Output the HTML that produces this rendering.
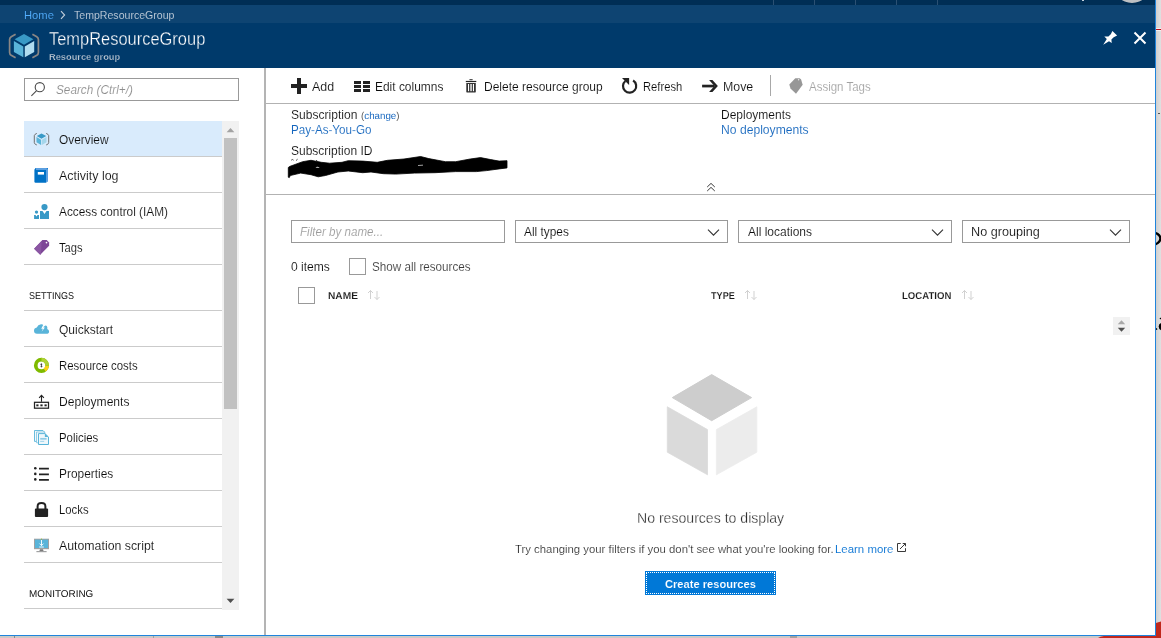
<!DOCTYPE html>
<html lang="en">
<head>
<meta charset="utf-8">
<title>TempResourceGroup - Resource group</title>
<style>
html,body{margin:0;padding:0;background:#fff;}
body{width:1161px;height:638px;overflow:hidden;font-family:"Liberation Sans",sans-serif;}
#page{will-change:transform;position:relative;width:1161px;height:638px;overflow:hidden;background:#fff;}
#page div,#page span,#page svg{position:absolute;display:block;box-sizing:border-box;}
.t{white-space:nowrap;margin:0;padding:0;transform-origin:0 50%;}
.hl{height:1px;background:#cbcbcb;left:24px;width:198px;}
.box{border:1px solid #999999;background:#fff;}
.cb{border:1px solid #999999;background:#fff;width:17px;height:17px;}

</style>
</head>
<body>
<div id="page">
<!-- chrome: top strip, breadcrumb, blade header -->
<div style="left:0;top:0;width:1155px;height:5px;background:#002e55;"></div>
<div style="left:773px;top:0;width:1px;height:5px;background:#2b5073;"></div>
<div style="left:814px;top:0;width:1px;height:5px;background:#2b5073;"></div>
<div style="left:855px;top:0;width:1px;height:5px;background:#2b5073;"></div>
<div style="left:896px;top:0;width:1px;height:5px;background:#2b5073;"></div>
<div style="left:937px;top:0;width:1px;height:5px;background:#2b5073;"></div>
<div style="left:1082px;top:0;width:2px;height:1px;background:#c4d0dc;"></div>
<div style="left:1113px;top:-35px;width:38px;height:38px;border-radius:50%;background:#bdc0c3;"></div>
<div style="left:0;top:5px;width:1155px;height:18px;background:#0e4472;"></div>
<div style="left:0;top:23px;width:1155px;height:45px;background:#003a6b;"></div>

<!-- breadcrumb chevron -->
<svg style="left:59px;top:10px;" width="8" height="10" viewBox="0 0 8 10"><path d="M2 1.2 L5.6 5 L2 8.8" fill="none" stroke="#c5d0dc" stroke-width="1.1"/></svg>

<!-- header resource-group icon -->
<svg style="left:8px;top:32px;" width="33" height="28" viewBox="8 32 33 28">
  <path d="M15.6 34.3 L11.2 36.8 Q9.6 37.8 9.6 39.6 L9.6 52.4 Q9.6 54.2 11.2 55.2 L15.6 57.7" fill="none" stroke="#8a8785" stroke-width="1.7"/>
  <path d="M32.4 34.3 L36.8 36.8 Q38.4 37.8 38.4 39.6 L38.4 52.4 Q38.4 54.2 36.8 55.2 L32.4 57.7" fill="none" stroke="#8a8785" stroke-width="1.7"/>
  <path d="M24 33.9 L33.4 39.3 L24 44.7 L14.6 39.3 Z" fill="#3999c6"/>
  <path d="M13.9 41 L23.3 46.4 L23.3 57.3 L13.9 51.9 Z" fill="#59b4d9"/>
  <path d="M24.8 46.4 L34.2 41 L34.2 51.9 L24.8 57.3 Z" fill="#b0dcef"/>
</svg>

<!-- pin + close -->
<svg style="left:1102px;top:30px;" width="16" height="16" viewBox="0 0 16 16">
  <path d="M10.4 1 L15.1 5.6 L11.7 7.2 L9.4 9.4 L9.7 13 L7 11.2 L1.2 14.8 L4.8 9 L2.3 6.4 L6.4 6.6 L8.8 4.2 Z" fill="#ffffff"/>
</svg>
<svg style="left:1133px;top:31px;" width="14" height="14" viewBox="0 0 14 14">
  <path d="M1.5 1.5 L12.5 12.5 M12.5 1.5 L1.5 12.5" stroke="#ffffff" stroke-width="2" fill="none"/>
</svg>

<!-- window edges -->
<div style="left:1155px;top:0;width:1px;height:636px;background:#1f84dc;"></div>
<div style="left:1156px;top:0;width:5px;height:638px;background:linear-gradient(90deg,#d2cecb 0,#d6d6d6 35%,#e0e0e0 100%);"></div>
<div style="left:1156px;top:28px;width:5px;height:3px;background:#f4f0f0;"></div>
<div style="left:1156px;top:29px;width:5px;height:1px;background:#c00d18;"></div>
<div style="left:1158px;top:113px;width:2px;height:1px;background:#555;"></div>
<svg style="left:1156px;top:229px;" width="5" height="19" viewBox="1156 229 5 19"><ellipse cx="1152" cy="238.6" rx="8.4" ry="6.1" fill="none" stroke="#000" stroke-width="2.3"/></svg>
<svg style="left:1156px;top:316px;" width="5" height="16" viewBox="1156 316 5 16"><path d="M1159.4 318.5 L1161 317.6 V319.6 Z" fill="#000"/><ellipse cx="1162.6" cy="326.6" rx="3.9" ry="3.8" fill="#000"/><path d="M1156 328.2 L1157 328 L1157.3 329.8 L1156 330 Z" fill="#1a1a1a"/></svg>


<div style="left:0;top:635px;width:1156px;height:1px;background:#1f84dc;"></div>
<div style="left:0;top:636px;width:1161px;height:2px;background:#cdc9c6;"></div>
<div style="left:14px;top:636px;width:1px;height:2px;background:#8c8c8c;"></div>
<div style="left:153px;top:636px;width:1px;height:2px;background:#a0a0a0;"></div>
<div style="left:215px;top:636px;width:8px;height:2px;background:#8d8986;"></div>
<div style="left:790px;top:636px;width:7px;height:2px;background:#a5a19e;"></div>
<svg style="left:1095px;top:620px;" width="66" height="18" viewBox="1095 620 66 18">
  <path d="M1156 623 Q1158 622 1161 621.5 L1161 638 L1098 638 Q1100 636.6 1104 636 L1156 636 Z" fill="#c0281c"/>
</svg>

<!-- sidebar -->
<div class="box" style="left:24px;top:78px;width:215px;height:23px;"></div>
<svg style="left:30px;top:81px;" width="16" height="16" viewBox="0 0 16 16">
  <circle cx="9.8" cy="6.2" r="4.6" fill="none" stroke="#4a4a4a" stroke-width="1.1"/>
  <path d="M6.6 9.6 L1.4 14.8" stroke="#4a4a4a" stroke-width="1.1" fill="none"/>
</svg>
<div style="left:24px;top:121px;width:198px;height:35px;background:#d9ebfc;"></div>
<div class="hl" style="top:156px;"></div>
<div class="hl" style="top:192px;"></div>
<div class="hl" style="top:228px;"></div>
<div class="hl" style="top:264px;"></div>
<div class="hl" style="top:310px;"></div>
<div class="hl" style="top:346px;"></div>
<div class="hl" style="top:382px;"></div>
<div class="hl" style="top:418px;"></div>
<div class="hl" style="top:454px;"></div>
<div class="hl" style="top:490px;"></div>
<div class="hl" style="top:526px;"></div>
<div class="hl" style="top:562px;"></div>
<div class="hl" style="top:608px;"></div>
<!-- sidebar scrollbar -->
<div style="left:222px;top:121px;width:17px;height:489px;background:#f1f1f1;"></div>
<div style="left:224px;top:138px;width:13px;height:271px;background:#c1c1c1;"></div>
<svg style="left:226px;top:127px;" width="9" height="6" viewBox="0 0 9 6"><path d="M0.6 5.2 L4.5 1 L8.4 5.2 Z" fill="#a3a3a3"/></svg>
<svg style="left:226px;top:598px;" width="9" height="6" viewBox="0 0 9 6"><path d="M0.6 0.8 L8.4 0.8 L4.5 5 Z" fill="#505050"/></svg>
<!-- splitter -->
<div style="left:264px;top:68px;width:2px;height:567px;background:#b4b4b4;"></div>

<!-- content lines -->
<div style="left:266px;top:103px;width:889px;height:1px;background:#b2b2b2;"></div>
<div style="left:266px;top:194px;width:889px;height:1px;background:#b2b2b2;"></div>
<div style="left:770px;top:75px;width:1px;height:21px;background:#a8a8a8;"></div>

<!-- filter boxes -->
<div class="box" style="left:291px;top:220px;width:214px;height:23px;"></div>
<div class="box" style="left:515px;top:220px;width:213px;height:23px;"></div>
<div class="box" style="left:738px;top:220px;width:214px;height:23px;"></div>
<div class="box" style="left:962px;top:220px;width:168px;height:23px;"></div>
<svg style="left:707px;top:228px;" width="13" height="9" viewBox="0 0 13 9"><path d="M1 1.6 L6.5 7.2 L12 1.6" fill="none" stroke="#333" stroke-width="1.1"/></svg>
<svg style="left:931px;top:228px;" width="13" height="9" viewBox="0 0 13 9"><path d="M1 1.6 L6.5 7.2 L12 1.6" fill="none" stroke="#333" stroke-width="1.1"/></svg>
<svg style="left:1109px;top:228px;" width="13" height="9" viewBox="0 0 13 9"><path d="M1 1.6 L6.5 7.2 L12 1.6" fill="none" stroke="#333" stroke-width="1.1"/></svg>
<div class="cb" style="left:349px;top:258px;"></div>
<div class="cb" style="left:298px;top:287px;"></div>

<!-- collapse chevron -->
<svg style="left:706px;top:182px;" width="10" height="10" viewBox="0 0 10 10"><path d="M1.2 5 L5 1.4 L8.8 5 M1.2 9 L5 5.4 L8.8 9" fill="none" stroke="#3a3a3a" stroke-width="1"/></svg>

<!-- sort arrows -->
<svg style="left:367px;top:289px;" width="14" height="12" viewBox="0 0 14 12"><path d="M3.5 10 L3.5 1.5 M1 4 L3.5 1.5 L6 4 M10 2 L10 10.5 M7.5 8 L10 10.5 L12.5 8" fill="none" stroke="#cccccc" stroke-width="0.9"/></svg>
<svg style="left:744px;top:289px;" width="14" height="12" viewBox="0 0 14 12"><path d="M3.5 10 L3.5 1.5 M1 4 L3.5 1.5 L6 4 M10 2 L10 10.5 M7.5 8 L10 10.5 L12.5 8" fill="none" stroke="#cccccc" stroke-width="0.9"/></svg>
<svg style="left:961px;top:289px;" width="14" height="12" viewBox="0 0 14 12"><path d="M3.5 10 L3.5 1.5 M1 4 L3.5 1.5 L6 4 M10 2 L10 10.5 M7.5 8 L10 10.5 L12.5 8" fill="none" stroke="#cccccc" stroke-width="0.9"/></svg>

<!-- grid mini scrollbar -->
<div style="left:1113px;top:317px;width:17px;height:18px;background:#f1f1f1;"></div>
<svg style="left:1117px;top:319px;" width="9" height="6" viewBox="0 0 9 6"><path d="M0.8 5.2 L4.5 1.2 L8.2 5.2 Z" fill="#a8a8a8"/></svg>
<svg style="left:1117px;top:327px;" width="9" height="6" viewBox="0 0 9 6"><path d="M0.8 0.8 L8.2 0.8 L4.5 4.8 Z" fill="#505050"/></svg>

<!-- redaction scribble -->
<svg style="left:286px;top:154px;" width="224" height="28" viewBox="286 154 224 28">
  <path d="M288.3 167.5 L289.5 166.5 L302.7 161.7 L311 160.3 L321.3 162.3 L329.6 163.2 L342 162.3 L348.2 160.7 L362.7 161.1 L377.2 162.3 L387.5 160.3 L404 159 L420.6 156.5 L428.8 158.6 L445.4 161.7 L455.7 161.7 L470.2 159 L480.5 157.6 L490.8 159.6 L499.1 161.1 L507 160.7 L507 167.9 L499.1 168.9 L486.7 170.6 L476.4 171.6 L455.7 171.6 L435 172.7 L414.4 173.1 L395.8 174.1 L383.4 173.7 L371 172 L362.7 172.7 L348.2 171 L337.9 172 L325.5 175.5 L318.2 176.8 L311 174.7 L300.7 173.1 L290.3 175.5 L289.3 177.6 L288.3 177.2 Z" fill="#000" stroke="#000" stroke-width="0.8" stroke-linejoin="round"/>
  <path d="M291.2 160.2 q1.2 -1.4 2.4 0 M296 160.6 l1.6 -1.4 M316 160.5 l1.2 0" stroke="#222" stroke-width="0.8" fill="none"/>
  <path d="M315.5 167.2 q2 -0.9 4.2 0.3 q-2.2 0.7 -4.2 -0.3 Z" fill="#e8e8e8"/>
  <path d="M418 165.1 l5 -0.4 l0 0.7 l-5 0.3 Z" fill="#d8d8d8"/>
</svg>

<!-- empty state cube -->
<svg style="left:660px;top:370px;" width="104" height="110" viewBox="660 370 104 110">
  <path d="M711.7 374.6 L751.6 397.6 L711.7 420.7 L672.3 397.6 Z" fill="#cdcdcd" stroke="#cdcdcd" stroke-width="1" stroke-linejoin="round"/>
  <path d="M667.3 406.8 L707.5 429.6 L707.5 474.8 L667.3 452.2 Z" fill="#dadada" stroke="#dadada" stroke-width="0.8" stroke-linejoin="round"/>
  <path d="M716.4 429.6 L756.8 406.8 L756.8 452.2 L716.4 474.8 Z" fill="#ececec" stroke="#ececec" stroke-width="0.8" stroke-linejoin="round"/>
</svg>

<!-- create button -->
<div style="left:645px;top:571px;width:131px;height:24px;background:#0078d7;"></div>
<div style="left:646px;top:572px;width:129px;height:22px;border:1px dotted #ffffff;"></div>

<!-- external link icon -->
<svg style="left:896px;top:542px;" width="11" height="11" viewBox="0 0 11 11">
  <path d="M4.7 1.5 H1.5 V9.5 H9.5 V6.2" fill="none" stroke="#3a3a3a" stroke-width="1"/>
  <path d="M4 7 L9.4 1.6 M6.7 1.5 H9.5 V4.3" fill="none" stroke="#3a3a3a" stroke-width="1"/>
</svg>
<!-- toolbar icons -->
<svg style="left:290px;top:77px;" width="18" height="18" viewBox="290 77 18 18">
  <path d="M297 78 H301 V84 H307 V88 H301 V94 H297 V88 H291 V84 H297 Z" fill="#222"/>
</svg>
<svg style="left:353px;top:80px;" width="18" height="13" viewBox="353 80 18 13">
  <path d="M354 81 h7 v3 h-7 Z M363 81 h7 v3 h-7 Z M354 85 h7 v3 h-7 Z M363 85 h7 v3 h-7 Z M354 89 h7 v3 h-7 Z M363 89 h7 v3 h-7 Z" fill="#222"/>
</svg>
<svg style="left:465px;top:78px;" width="13" height="16" viewBox="465 78 13 16">
  <rect x="469.3" y="79" width="3.5" height="1.2" rx="0.6" fill="#555"/>
  <rect x="465.8" y="80.9" width="10.5" height="1.2" fill="#222"/>
  <path d="M466.3 83 H475.8 V91.4 Q475.8 92.6 474.6 92.6 H467.5 Q466.3 92.6 466.3 91.4 Z" fill="#333"/>
  <rect x="468" y="84" width="1.1" height="7.2" fill="#fff"/>
  <rect x="470.2" y="84" width="1.7" height="7.2" fill="#d5d5d5"/>
  <rect x="472.9" y="84" width="1.1" height="7.2" fill="#fff"/>
</svg>
<svg style="left:620px;top:76px;" width="19" height="19" viewBox="620 76 19 19">
  <path d="M625.4 81 A6.6 6.6 0 1 0 633.1 80.5" fill="none" stroke="#222" stroke-width="2.2"/>
  <path d="M622 78 L629.1 78 L629.1 85 Z" fill="#222"/>
</svg>
<svg style="left:700px;top:79px;" width="19" height="14" viewBox="700 79 19 14">
  <path d="M702.1 84.7 H714 V87.4 H702.1 Z" fill="#222"/>
  <path d="M709.1 80.1 H712.4 L717.9 86 L712.4 91.9 H709.1 L714.4 86 Z" fill="#222"/>
</svg>
<svg style="left:788px;top:77px;" width="16" height="18" viewBox="788 77 16 18">
  <path d="M789.3 84.6 L795.3 78.2 H799.6 L801 79.2 L802.7 84.8 L796 93.7 L790.5 88.4 Z" fill="#979797"/>
  <circle cx="798.6" cy="79.8" r="0.7" fill="#e8e8e8"/>
</svg>

<!-- sidebar icons -->
<!-- overview -->
<svg style="left:33px;top:132px;" width="17" height="15" viewBox="33 132 17 15">
  <path d="M36.8 133.4 L34.9 134.5 Q34.3 134.9 34.3 135.7 V142.7 Q34.3 143.5 34.9 143.9 L36.8 145" fill="none" stroke="#6f6f6f" stroke-width="1"/>
  <path d="M46.2 133.4 L48.1 134.5 Q48.7 134.9 48.7 135.7 V142.7 Q48.7 143.5 48.1 143.9 L46.2 145" fill="none" stroke="#6f6f6f" stroke-width="1"/>
  <path d="M41.5 133.4 L46.2 136.1 L41.5 138.8 L36.8 136.1 Z" fill="#3999c6"/>
  <path d="M36.5 137 L41.1 139.7 V145 L36.5 142.3 Z" fill="#59b4d9"/>
  <path d="M41.9 139.7 L46.5 137 V142.3 L41.9 145 Z" fill="#a5d6eb"/>
</svg>
<!-- activity log -->
<svg style="left:33px;top:167px;" width="17" height="17" viewBox="33 167 17 17">
  <path d="M35.2 168 H48 V181.6 L46 182.8 V170 H34.6 Z" fill="#5b9fe0"/>
  <path d="M34.4 170 H46 V182.8 H35.6 Q34.4 182.8 34.4 181.6 Z" fill="#0072c6"/>
  <path d="M34.4 170 L35.2 168.6 H36 V170 Z" fill="#0072c6"/>
  <rect x="46.8" y="168" width="1.2" height="1.1" fill="#1b7fd0"/>
  <rect x="37.8" y="172" width="6.2" height="2.6" fill="#fff"/>
</svg>
<!-- access control -->
<svg style="left:33px;top:203px;" width="17" height="17" viewBox="33 203 17 17">
  <circle cx="44.5" cy="207.1" r="3.1" fill="#3999c6"/>
  <path d="M40 211 H42.5 L44.5 214.1 L46.5 211 H49 V219 H40 Z" fill="#3999c6"/>
  <circle cx="36.5" cy="212.1" r="1.65" fill="#3999c6"/>
  <path d="M34.1 215 H35.5 L36.5 216.5 L37.5 215 H39 V219 H34.1 Z" fill="#3999c6"/>
</svg>
<!-- tags -->
<svg style="left:33px;top:239px;" width="17" height="17" viewBox="33 239 17 17">
  <path d="M42.4 240.1 H46.8 L49.1 242.4 V245.8 L40.2 254.7 L34.1 248.7 Z" fill="#7d4797"/>
  <path d="M41.6 240.9 L41 253.9 L40.2 254.7 L34.1 248.7 Z" fill="#8b56a3"/>
  <circle cx="46.5" cy="242.6" r="0.85" fill="#fff"/>
</svg>
<!-- quickstart -->
<svg style="left:33px;top:323px;" width="17" height="12" viewBox="33 323 17 12">
  <path d="M37 333.8 Q34 333.8 34 330.8 Q34 328 36.8 327.5 Q37.8 324.6 41 324.3 Q42.6 324.2 43.4 324.9 L44.3 326.6 Q44.9 325.3 45.8 325.4 Q47 325.6 47.3 327.2 Q47.5 328.2 47.2 329 Q49.1 329.6 49.1 331.4 Q49.1 333.8 46.4 333.8 Z" fill="#59b4d9"/>
  <path d="M43.7 324 L41.2 328.8 H42.9 L41.6 331.8 L44.9 327.6 H43.4 L44.9 324.6 Z" fill="#fff"/>
</svg>
<!-- resource costs -->
<svg style="left:33px;top:357px;" width="17" height="17" viewBox="33 357 17 17">
  <circle cx="41.45" cy="365.4" r="5.7" fill="none" stroke="#7fba00" stroke-width="3.7"/>
  <path d="M41.45 359.7 A5.7 5.7 0 0 1 47.15 365.6" fill="none" stroke="#add133" stroke-width="3.7"/>
  <path d="M47.1 365.9 A5.7 5.7 0 0 1 44.7 370.1" fill="none" stroke="#fcd116" stroke-width="3.7"/>
  <path d="M41.45 363.4 V367.4 M40.4 364.4 H42.2 M40.6 366.4 H42.4" stroke="#333" stroke-width="0.8" fill="none"/>
</svg>
<!-- deployments -->
<svg style="left:33px;top:394px;" width="17" height="16" viewBox="33 394 17 16">
  <rect x="34.5" y="402.3" width="14" height="5.9" fill="#fff" stroke="#222" stroke-width="1.25"/>
  <rect x="36.3" y="404.4" width="2.2" height="1.9" fill="#222"/>
  <rect x="40.4" y="404.4" width="2.2" height="1.9" fill="#222"/>
  <rect x="44.5" y="404.4" width="2.2" height="1.9" fill="#222"/>
  <path d="M41.5 401.8 V395.4 M39.1 397.8 L41.5 395.4 L43.9 397.8" fill="none" stroke="#222" stroke-width="1.1"/>
</svg>
<!-- policies -->
<svg style="left:33px;top:429px;" width="17" height="17" viewBox="33 429 17 17">
  <path d="M34.5 430.5 H43 L44.6 432.1 V441.4 H34.5 Z" fill="#f3f9fc" stroke="#59b4d9" stroke-width="0.9"/>
  <path d="M36.5 432 H44.6 V442.8 H36.5 Z" fill="#f3f9fc" stroke="#7cc3e1" stroke-width="0.8"/>
  <path d="M38.5 433.6 H44.9 L48.5 437 V444.5 H38.5 Z" fill="#eef7fb" stroke="#59b4d9" stroke-width="1"/>
  <path d="M44.9 433.6 L48.5 437 H44.9 Z" fill="#59b4d9"/>
  <path d="M40.2 438.8 H46.6" stroke="#8fcbe6" stroke-width="1.7" fill="none"/>
  <path d="M40.2 441.4 H44.2" stroke="#8fcbe6" stroke-width="0.8" fill="none"/>
</svg>
<!-- properties -->
<svg style="left:33px;top:466px;" width="17" height="16" viewBox="33 466 17 16">
  <circle cx="35.3" cy="468.3" r="1.3" fill="#222"/>
  <circle cx="35.3" cy="473.9" r="1.3" fill="#222"/>
  <circle cx="35.3" cy="479.4" r="1.3" fill="#222"/>
  <path d="M39 468.7 H48.9 M39 474.3 H48.9 M39 479.8 H48.9" stroke="#222" stroke-width="1.8" fill="none"/>
</svg>
<!-- locks -->
<svg style="left:33px;top:500px;" width="17" height="18" viewBox="33 500 17 18">
  <path d="M37.6 509.4 V506.4 Q37.6 503 41.5 503 Q45.4 503 45.4 506.4 V509.4" fill="none" stroke="#222" stroke-width="2"/>
  <path d="M35.9 508.6 H47.1 Q48.1 508.6 48.1 509.6 V515.9 Q48.1 516.9 47.1 516.9 H35.9 Q34.9 516.9 34.9 515.9 V509.6 Q34.9 508.6 35.9 508.6 Z" fill="#222"/>
</svg>
<!-- automation script -->
<svg style="left:33px;top:537px;" width="17" height="17" viewBox="33 537 17 17">
  <rect x="34" y="538.7" width="15" height="10.5" fill="#a0a1a2"/>
  <rect x="35" y="539.6" width="13" height="8.4" fill="#59b4d9"/>
  <path d="M40 549.2 H43 L43.6 551 H39.4 Z" fill="#7a7a7a"/>
  <rect x="36.4" y="551" width="10.2" height="1.2" fill="#a0a1a2"/>
  <path d="M41.5 540 V545.6 M39.5 543.6 L41.5 545.6 L43.5 543.6 M39.2 547 H43.8" stroke="#fff" stroke-width="0.9" fill="none"/>
  <circle cx="41.5" cy="539.1" r="0.5" fill="#7fba00"/>
</svg>

<span class="t" id="t0" style="left:24px;top:9px;font-size:11px;line-height:13px;color:#55b0ff;transform:scaleX(1.0178);-webkit-text-stroke:0.1px #0e4472;">Home</span>
<span class="t" id="t1" style="left:74px;top:9px;font-size:11px;line-height:13px;color:#c9d3de;transform:scaleX(0.9612);-webkit-text-stroke:0.1px #0e4472;">TempResourceGroup</span>
<span class="t light" id="t2" style="left:49px;top:28px;font-size:18px;line-height:22px;color:#ffffff;transform:scaleX(0.9135);-webkit-text-stroke:0.3px #003a6b;">TempResourceGroup</span>
<span class="t" id="t3" style="left:49px;top:51px;font-size:9.6px;line-height:12px;color:#c3ccd6;font-weight:700;transform:scaleX(0.9669);-webkit-text-stroke:0.25px #003a6b;">Resource group</span>
<span class="t" id="t4" style="left:56px;top:83px;font-size:12.5px;line-height:15px;color:#8e8e8e;font-style:italic;transform:scaleX(0.9416);-webkit-text-stroke:0.12px #ffffff;">Search (Ctrl+/)</span>
<span class="t" id="t5" style="left:59px;top:133px;font-size:12.5px;line-height:15px;color:#0a0a0a;transform:scaleX(0.9500);-webkit-text-stroke:0.12px #d9ebfc;">Overview</span>
<span class="t" id="t6" style="left:59px;top:169px;font-size:12.5px;line-height:15px;color:#0a0a0a;transform:scaleX(0.9960);-webkit-text-stroke:0.12px #ffffff;">Activity log</span>
<span class="t" id="t7" style="left:59px;top:205px;font-size:12.5px;line-height:15px;color:#0a0a0a;transform:scaleX(0.9451);-webkit-text-stroke:0.12px #ffffff;">Access control (IAM)</span>
<span class="t" id="t8" style="left:59px;top:241px;font-size:12.5px;line-height:15px;color:#0a0a0a;transform:scaleX(0.8946);-webkit-text-stroke:0.12px #ffffff;">Tags</span>
<span class="t" id="t9" style="left:59px;top:323px;font-size:12.5px;line-height:15px;color:#0a0a0a;transform:scaleX(0.9616);-webkit-text-stroke:0.12px #ffffff;">Quickstart</span>
<span class="t" id="t10" style="left:59px;top:359px;font-size:12.5px;line-height:15px;color:#0a0a0a;transform:scaleX(0.9125);-webkit-text-stroke:0.12px #ffffff;">Resource costs</span>
<span class="t" id="t11" style="left:59px;top:395px;font-size:12.5px;line-height:15px;color:#0a0a0a;transform:scaleX(0.9656);-webkit-text-stroke:0.12px #ffffff;">Deployments</span>
<span class="t" id="t12" style="left:59px;top:431px;font-size:12.5px;line-height:15px;color:#0a0a0a;transform:scaleX(0.9124);-webkit-text-stroke:0.12px #ffffff;">Policies</span>
<span class="t" id="t13" style="left:59px;top:467px;font-size:12.5px;line-height:15px;color:#0a0a0a;transform:scaleX(0.9526);-webkit-text-stroke:0.12px #ffffff;">Properties</span>
<span class="t" id="t14" style="left:59px;top:503px;font-size:12.5px;line-height:15px;color:#0a0a0a;transform:scaleX(0.9076);-webkit-text-stroke:0.12px #ffffff;">Locks</span>
<span class="t" id="t15" style="left:59px;top:539px;font-size:12.5px;line-height:15px;color:#0a0a0a;transform:scaleX(0.9860);-webkit-text-stroke:0.12px #ffffff;">Automation script</span>
<span class="t" id="t16" style="left:29px;top:291px;font-size:9.9px;line-height:12px;color:#111111;transform:scaleX(0.9111);text-rendering:geometricPrecision;">SETTINGS</span>
<span class="t" id="t17" style="left:29px;top:589px;font-size:9.9px;line-height:12px;color:#111111;transform:scaleX(1.0043);text-rendering:geometricPrecision;">MONITORING</span>
<span class="t" id="t18" style="left:312px;top:80px;font-size:12.5px;line-height:15px;color:#0a0a0a;transform:scaleX(0.9927);-webkit-text-stroke:0.12px #ffffff;">Add</span>
<span class="t" id="t19" style="left:375px;top:80px;font-size:12.5px;line-height:15px;color:#0a0a0a;transform:scaleX(0.9555);-webkit-text-stroke:0.12px #ffffff;">Edit columns</span>
<span class="t" id="t20" style="left:484px;top:80px;font-size:12.5px;line-height:15px;color:#0a0a0a;transform:scaleX(0.9597);-webkit-text-stroke:0.12px #ffffff;">Delete resource group</span>
<span class="t" id="t21" style="left:643px;top:80px;font-size:12.5px;line-height:15px;color:#0a0a0a;transform:scaleX(0.8958);-webkit-text-stroke:0.12px #ffffff;">Refresh</span>
<span class="t" id="t22" style="left:723px;top:80px;font-size:12.5px;line-height:15px;color:#0a0a0a;transform:scaleX(0.9897);-webkit-text-stroke:0.12px #ffffff;">Move</span>
<span class="t" id="t23" style="left:809px;top:80px;font-size:12.5px;line-height:15px;color:#a2a2a2;transform:scaleX(0.9187);-webkit-text-stroke:0.12px #ffffff;">Assign Tags</span>
<span class="t" id="t24" style="left:291px;top:108px;font-size:12.5px;line-height:15px;color:#0a0a0a;transform:scaleX(0.9653);-webkit-text-stroke:0.12px #ffffff;">Subscription</span>
<span class="t" id="t25" style="left:361px;top:111px;font-size:9.9px;line-height:12px;color:#555555;transform:scaleX(0.9882);text-rendering:geometricPrecision;">(<a style="color:#1767bf">change</a>)</span>
<span class="t" id="t26" style="left:291px;top:123px;font-size:12.5px;line-height:15px;color:#1365bd;transform:scaleX(0.9307);-webkit-text-stroke:0.1px #ffffff;">Pay-As-You-Go</span>
<span class="t" id="t27" style="left:291px;top:144px;font-size:12.5px;line-height:15px;color:#0a0a0a;transform:scaleX(0.9604);-webkit-text-stroke:0.12px #ffffff;">Subscription ID</span>
<span class="t" id="t28" style="left:721px;top:108px;font-size:12.5px;line-height:15px;color:#0a0a0a;transform:scaleX(0.9590);-webkit-text-stroke:0.12px #ffffff;">Deployments</span>
<span class="t" id="t29" style="left:721px;top:123px;font-size:12.5px;line-height:15px;color:#1365bd;transform:scaleX(0.9708);-webkit-text-stroke:0.1px #ffffff;">No deployments</span>
<span class="t" id="t30" style="left:300px;top:225px;font-size:12.5px;line-height:15px;color:#9a9a9a;font-style:italic;transform:scaleX(0.9283);-webkit-text-stroke:0.12px #ffffff;">Filter by name...</span>
<span class="t" id="t31" style="left:524px;top:225px;font-size:12.5px;line-height:15px;color:#0a0a0a;transform:scaleX(0.9497);-webkit-text-stroke:0.12px #ffffff;">All types</span>
<span class="t" id="t32" style="left:748px;top:225px;font-size:12.5px;line-height:15px;color:#0a0a0a;transform:scaleX(0.9596);-webkit-text-stroke:0.12px #ffffff;">All locations</span>
<span class="t" id="t33" style="left:971px;top:225px;font-size:12.5px;line-height:15px;color:#0a0a0a;transform:scaleX(1.0112);-webkit-text-stroke:0.12px #ffffff;">No grouping</span>
<span class="t" id="t34" style="left:291px;top:260px;font-size:12.5px;line-height:15px;color:#0a0a0a;transform:scaleX(0.9649);-webkit-text-stroke:0.12px #ffffff;">0 items</span>
<span class="t" id="t35" style="left:372px;top:260px;font-size:12.5px;line-height:15px;color:#3a3a3a;transform:scaleX(0.9344);-webkit-text-stroke:0.12px #ffffff;">Show all resources</span>
<span class="t" id="t36" style="left:328px;top:291px;font-size:9.9px;line-height:12px;color:#1a1a1a;font-weight:700;transform:scaleX(1.0307);text-rendering:geometricPrecision;-webkit-text-stroke:0.1px #ffffff;">NAME</span>
<span class="t" id="t37" style="left:711px;top:291px;font-size:9.9px;line-height:12px;color:#1a1a1a;font-weight:700;transform:scaleX(0.9219);text-rendering:geometricPrecision;-webkit-text-stroke:0.1px #ffffff;">TYPE</span>
<span class="t" id="t38" style="left:902px;top:291px;font-size:9.9px;line-height:12px;color:#1a1a1a;font-weight:700;transform:scaleX(0.9704);text-rendering:geometricPrecision;-webkit-text-stroke:0.1px #ffffff;">LOCATION</span>
<span class="t light" id="t39" style="left:637px;top:509px;font-size:14.8px;line-height:18px;color:#262626;transform:scaleX(0.9517);-webkit-text-stroke:0.3px #ffffff;">No resources to display</span>
<span class="t light" id="t40" style="left:515px;top:542px;font-size:11.5px;line-height:14px;color:#161616;transform:scaleX(0.9864);-webkit-text-stroke:0.2px #ffffff;">Try changing your filters if you don't see what you're looking for.</span>
<span class="t" id="t41" style="left:835px;top:542px;font-size:11.5px;line-height:14px;color:#0a74d4;transform:scaleX(0.9937);-webkit-text-stroke:0.05px #ffffff;">Learn more</span>
<span class="t" id="t42" style="left:665px;top:577px;font-size:11.6px;line-height:14px;color:#ffffff;font-weight:700;transform:scaleX(0.9590);-webkit-text-stroke:0.15px #0078d7;">Create resources</span>
</div>
</body>
</html>
